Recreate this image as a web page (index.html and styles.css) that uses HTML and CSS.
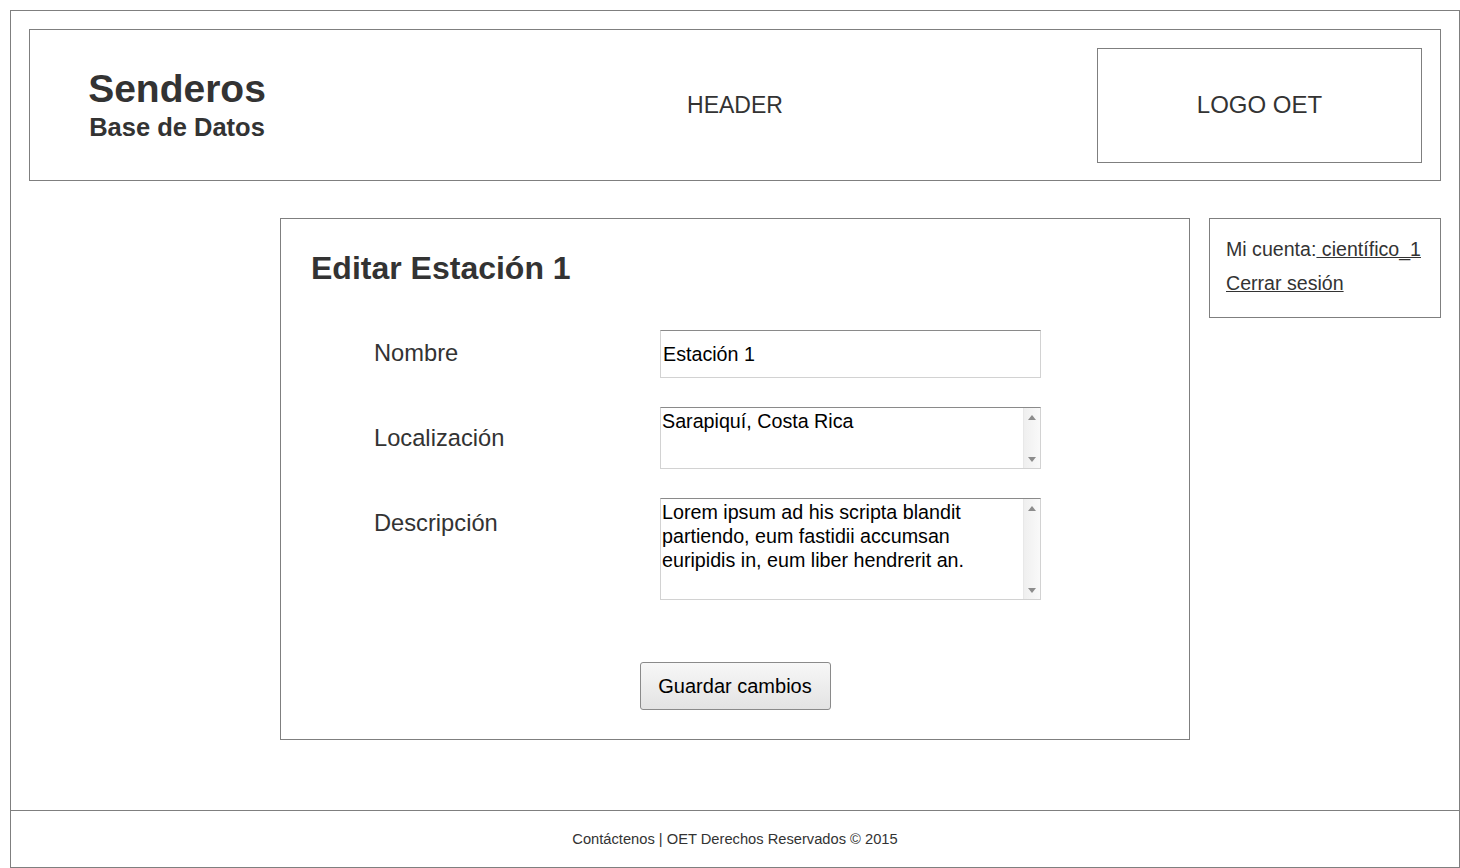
FILE: index.html
```html
<!DOCTYPE html>
<html lang="es">
<head>
<meta charset="utf-8">
<title>Senderos - Editar Estación</title>
<link rel="stylesheet" href="styles.css">
</head>
<body>
<div class="frame">
  <div class="content">
    <header class="header">
      <div class="brand-col">
        <div class="brand">
          <div class="brand-title">Senderos</div>
          <div class="brand-sub">Base de Datos</div>
        </div>
      </div>
      <div class="header-label">HEADER</div>
      <div class="logo-col">
        <div class="logo-box">LOGO OET</div>
      </div>
    </header>

    <div class="main-row">
      <section class="card">
        <h1 class="card-title">Editar Estación 1</h1>
        <form class="form">
          <label class="lbl lbl-1" for="nombre">Nombre</label>
          <input class="field" id="nombre" type="text" value="Estación 1">

          <label class="lbl lbl-2" for="loc">Localización</label>
          <div class="area area-sm">
            <textarea id="loc" class="area-text">Sarapiquí, Costa Rica</textarea>
            <div class="scroll"><span class="arrow-up"></span><span class="arrow-down"></span></div>
          </div>

          <label class="lbl lbl-3" for="desc">Descripción</label>
          <div class="area area-lg">
            <textarea id="desc" class="area-text">Lorem ipsum ad his scripta blandit partiendo, eum fastidii accumsan euripidis in, eum liber hendrerit an.</textarea>
            <div class="scroll"><span class="arrow-up"></span><span class="arrow-down"></span></div>
          </div>
        </form>
        <div class="actions">
          <button class="btn" type="button">Guardar cambios</button>
        </div>
      </section>

      <aside class="account">
        <div class="account-line">Mi cuenta:<a href="#" class="link"> científico_1</a></div>
        <div class="account-line"><a href="#" class="link">Cerrar sesión</a></div>
      </aside>
    </div>
  </div>

  <footer class="footer">Contáctenos | OET Derechos Reservados © 2015</footer>
</div>
</body>
</html>
```

FILE: styles.css
```css
* { box-sizing: border-box; }

html, body {
  margin: 0;
  padding: 0;
}

body {
  padding: 10px 0 0 10px;
  font-family: "Liberation Sans", Arial, sans-serif;
  color: #333;
  background: #fff;
}

.frame {
  width: 1450px;
  height: 858px;
  border: 1px solid #7f7f7f;
  display: flex;
  flex-direction: column;
}

.content {
  flex: 1;
  padding: 18px 18px 0 18px;
}

/* Header */
.header {
  height: 152px;
  border: 1px solid #7f7f7f;
  display: grid;
  grid-template-columns: 1fr auto 1fr;
  align-items: center;
}

.brand {
  width: 294px;
  text-align: center;
}

.brand-title {
  font-size: 39px;
  font-weight: bold;
  line-height: 40px;
}

.brand-sub {
  font-size: 25.5px;
  font-weight: bold;
  line-height: 28px;
  margin-top: 4px;
}

.header-label {
  font-size: 23px;
  line-height: 28px;
}

.logo-col {
  display: flex;
  justify-content: flex-end;
}

.logo-box {
  width: 325px;
  height: 115px;
  margin-right: 18px;
  border: 1px solid #7f7f7f;
  display: flex;
  align-items: center;
  justify-content: center;
  font-size: 24px;
}

/* Main */
.main-row {
  margin-top: 37px;
  display: flex;
  justify-content: flex-end;
  align-items: flex-start;
  gap: 19px;
}

.card {
  width: 910px;
  border: 1px solid #7f7f7f;
  padding: 29px 30px 29px 30px;
}

.card-title {
  margin: 0;
  font-size: 32px;
  line-height: 40px;
  font-weight: bold;
  color: #333;
}

.form {
  margin-top: 42px;
  margin-left: 63px;
  display: grid;
  grid-template-columns: 286px 381px;
  row-gap: 29px;
  align-items: start;
}

.lbl {
  font-size: 23.7px;
  line-height: 28px;
  color: #333;
}
.lbl-1 { padding-top: 9px; }
.lbl-2 { padding-top: 17px; }
.lbl-3 { padding-top: 11px; }

.field {
  width: 381px;
  height: 48px;
  margin: 0;
  padding: 0 2px;
  border: 1px solid #d2d2d2;
  border-top-color: #8a8a8a;
  font-family: "Liberation Sans", Arial, sans-serif;
  font-size: 19.7px;
  color: #000;
  background: #fff;
  outline: none;
}

.area {
  width: 381px;
  display: flex;
  border: 1px solid #d2d2d2;
  border-top-color: #8a8a8a;
  background: #fff;
}
.area-sm { height: 62px; }
.area-lg { height: 102px; }

.area-text {
  flex: 1;
  border: none;
  outline: none;
  resize: none;
  overflow: hidden;
  margin: 0;
  padding: 1px 1px 0 1px;
  font-family: "Liberation Sans", Arial, sans-serif;
  font-size: 19.7px;
  line-height: 24px;
  color: #000;
  background: #fff;
}

.scroll {
  width: 17px;
  background: linear-gradient(to right, #efefef, #f9f9f9);
  border-left: 1px solid #e8e8e8;
  display: flex;
  flex-direction: column;
  justify-content: space-between;
  align-items: center;
  padding: 7px 0 6px 0;
}

.arrow-up {
  width: 0;
  height: 0;
  border-left: 4px solid transparent;
  border-right: 4px solid transparent;
  border-bottom: 5px solid #8c8c8c;
}

.arrow-down {
  width: 0;
  height: 0;
  border-left: 4px solid transparent;
  border-right: 4px solid transparent;
  border-top: 5px solid #8c8c8c;
}

.actions {
  margin-top: 62px;
  display: flex;
  justify-content: center;
}

.btn {
  width: 191px;
  height: 48px;
  border: 1px solid #8a8a8a;
  border-radius: 3px;
  background: linear-gradient(to bottom, #f7f7f7, #e3e3e3);
  font-family: "Liberation Sans", Arial, sans-serif;
  font-size: 20px;
  color: #000;
  padding: 0;
}

/* Account box */
.account {
  width: 232px;
  height: 100px;
  border: 1px solid #7f7f7f;
  padding: 13px 0 0 16px;
}

.account-line {
  font-size: 19.6px;
  line-height: 34px;
  color: #333;
  white-space: pre;
}

.link {
  color: #333;
  text-decoration: underline;
}

/* Footer */
.footer {
  height: 57px;
  border-top: 1px solid #7f7f7f;
  display: flex;
  align-items: center;
  justify-content: center;
  font-size: 14.7px;
  color: #333;
}
```
